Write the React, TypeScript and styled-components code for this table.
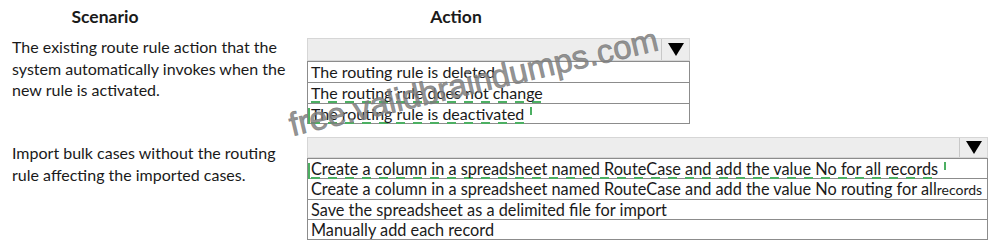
import React from "react";
import styled, { createGlobalStyle } from "styled-components";

const Global = createGlobalStyle`
  html, body { margin: 0; padding: 0; background: #fff; }
  body { font-family: Lato, "Open Sans", sans-serif; color: #1a1a1a; }
`;

const Page = styled.div`
  position: relative;
  width: 991px;
  height: 248px;
  overflow: hidden;
  background: #fff;
`;

const Grid = styled.div`
  display: grid;
  grid-template-columns: 307px 1fr;
  grid-template-rows: 38px 99px auto;
`;

const Heading = styled.div<{ $w: number }>`
  width: ${(p) => p.$w}px;
  text-align: center;
  font-weight: 700;
  font-size: 17.5px;
  line-height: 22px;
  padding-top: 6px;
`;

const Scenario = styled.div<{ $top: number }>`
  margin-top: ${(p) => p.$top}px;
  padding-left: 12px;
  font-size: 16px;
  line-height: 21.5px;
  width: 285px;
`;

const Dropdown = styled.div<{ $w: number }>`
  width: ${(p) => p.$w}px;
  display: flex;
  flex-direction: column;
`;

const Header = styled.div<{ $h: number }>`
  height: ${(p) => p.$h}px;
  display: flex;
  justify-content: flex-end;
  background: #ededed;
  border: 1px solid #d6d6d6;
  box-sizing: border-box;
`;

const Arrow = styled.div`
  width: 27px;
  border-left: 1px solid #c8c8c8;
  display: flex;
  align-items: center;
  justify-content: center;
`;

const Tri = styled.div`
  width: 0;
  height: 0;
  border-left: 8px solid transparent;
  border-right: 8px solid transparent;
  border-top: 13px solid #000;
`;

const Options = styled.div`
  border: 1px solid #8c8c8c;
  border-top: none;
`;

const Option = styled.div<{ $h: number; $fs: number }>`
  height: ${(p) => p.$h}px;
  box-sizing: border-box;
  border-top: 1px solid #8c8c8c;
  padding-left: 3px;
  font-size: ${(p) => p.$fs}px;
  line-height: ${(p) => p.$h - 1}px;
  white-space: nowrap;
  overflow: visible;
`;

const Marked = styled.span<{ $ticks?: boolean }>`
  position: relative;
  padding-bottom: 1px;
  background: repeating-linear-gradient(to right, #4caf62 0 9px, transparent 9px 17px) left bottom / 100% 2px
    no-repeat;
  ${(p) =>
    p.$ticks
      ? `
    &::before, &::after {
      content: "";
      position: absolute;
      width: 2px;
      background: #4caf62;
      bottom: 0;
    }
    &::before { left: -3px; height: 16px; }
    &::after { right: -8px; height: 8px; top: 3px; bottom: auto; }
  `
      : ""}
`;

const Small = styled.span`
  font-size: 14px;
`;

const Watermark = styled.div`
  position: absolute;
  left: 294px;
  top: 106px;
  font-family: "Liberation Sans", Arial, sans-serif;
  font-size: 33px;
  color: rgba(125, 125, 125, 0.82);
  -webkit-text-stroke: 0.8px rgba(125, 125, 125, 0.82);
  transform: rotate(-13.2deg);
  transform-origin: left bottom;
  white-space: nowrap;
  pointer-events: none;
`;

export default function App() {
  return (
    <Page>
      <Global />
      <Grid>
        <Heading $w={210}>Scenario</Heading>
        <Heading $w={298}>Action</Heading>

        <Scenario $top={-2}>
          The existing route rule action that the system automatically invokes when the new rule is activated.
        </Scenario>
        <div>
          <Dropdown $w={383}>
            <Header $h={23}>
              <Arrow>
                <Tri />
              </Arrow>
            </Header>
            <Options>
              <Option $h={21} $fs={16}>The routing rule is deleted</Option>
              <Option $h={21} $fs={16}>
                <Marked>The routing rule does not change</Marked>
              </Option>
              <Option $h={20} $fs={16}>
                <Marked $ticks>The routing rule is deactivated</Marked>
              </Option>
            </Options>
          </Dropdown>
        </div>

        <Scenario $top={5}>Import bulk cases without the routing rule affecting the imported cases.</Scenario>
        <div>
          <Dropdown $w={681}>
            <Header $h={21}>
              <Arrow>
                <Tri />
              </Arrow>
            </Header>
            <Options>
              <Option $h={20} $fs={16.3}>
                <Marked $ticks>Create a column in a spreadsheet named RouteCase and add the value No for all records</Marked>
              </Option>
              <Option $h={21} $fs={16.3}>
                Create a column in a spreadsheet named RouteCase and add the value No routing for all<Small>records</Small>
              </Option>
              <Option $h={20} $fs={16.3}>Save the spreadsheet as a delimited file for import</Option>
              <Option $h={20} $fs={16.3}>Manually add each record</Option>
            </Options>
          </Dropdown>
        </div>
      </Grid>
      <Watermark>free.validbraindumps.com</Watermark>
    </Page>
  );
}
